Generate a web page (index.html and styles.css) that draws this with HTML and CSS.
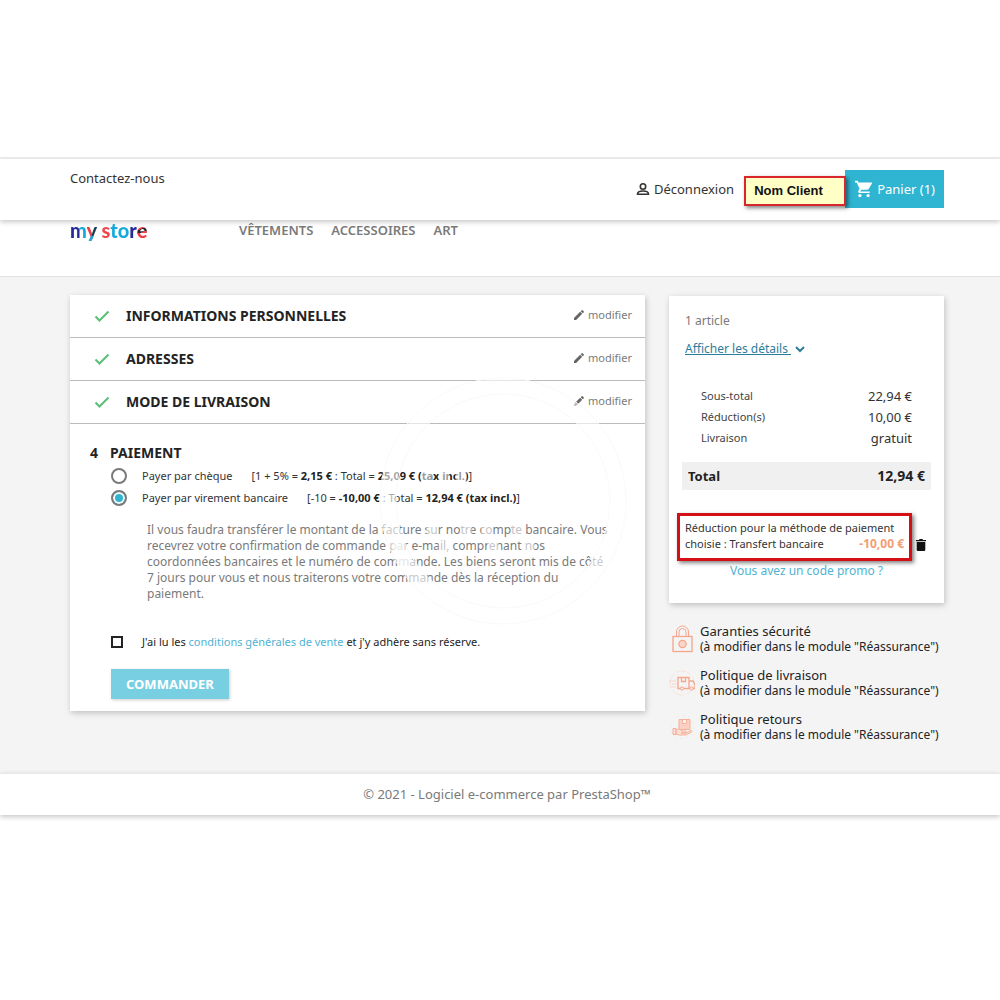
FILE: index.html
```html
<!DOCTYPE html>
<html lang="fr">
<head>
  <meta charset="UTF-8">
  <meta name="viewport" content="width=device-width, initial-scale=1.0">
  <title>Commande - my store</title>
  <link rel="stylesheet" href="styles.css">
</head>
<body>
  <div class="page">
    <header>
      <nav class="top-nav">
        <a class="contact" href="#">Contactez-nous</a>
        <div class="user-links">
          <a class="logout" href="#">
            <svg width="14" height="16" viewBox="0 0 14 16" fill="none" stroke="#333" stroke-width="1.600"><circle cx="7" cy="5.500" r="2.700"/><path d="M1.500 13.200c0-2.400 2.800-3.200 5.500-3.200s5.500.8 5.500 3.200z"/></svg>
            Déconnexion
          </a>
          <span class="client">Nom Client</span>
          <a class="cart" href="#">
            <svg width="18" height="18" viewBox="1 2 22 20" fill="#fff"><path d="M7 18c-1.100 0-2 .9-2 2s.9 2 2 2 2-.9 2-2-.9-2-2-2zM1 2v2h2l3.600 7.600-1.400 2.400C4.500 15.400 5.500 17 7 17h12v-2H7.400l1.100-2h7.500c.7 0 1.400-.4 1.700-1L21.900 5c.4-.7-.1-1-.9-1H5.200L4.300 2H1zm16 16c-1.100 0-2 .9-2 2s.9 2 2 2 2-.9 2-2-.9-2-2-2z"/></svg>
            Panier (1)
          </a>
        </div>
      </nav>
      <div class="menu-bar">
        <a class="logo" href="#" aria-label="my store"><span class="l-m">m</span><span class="l-y">y</span> <span class="l-s">s</span><span class="l-t">to</span><span class="l-r">r</span><span class="l-e">e</span></a>
        <ul class="menu">
          <li><a href="#">VÊTEMENTS</a></li>
          <li><a href="#">ACCESSOIRES</a></li>
          <li><a href="#">ART</a></li>
        </ul>
      </div>
    </header>

    <main class="checkout">
      <div class="steps">
        <section class="step">
          <svg class="done" width="16" height="12" viewBox="0 0 16 12"><path d="M1.500 6.500l4 4L14.500 1.500"/></svg>
          <h2>INFORMATIONS PERSONNELLES</h2>
          <a class="edit" href="#"><svg width="10" height="10" viewBox="0 0 18 18"><path d="M0 14.200V18h3.800L14.800 6.900l-3.700-3.700L0 14.200zM17.700 4a1 1 0 0 0 0-1.400L15.400.3a1 1 0 0 0-1.400 0l-1.900 1.800 3.800 3.800L17.700 4z"/></svg>modifier</a>
        </section>
        <section class="step">
          <svg class="done" width="16" height="12" viewBox="0 0 16 12"><path d="M1.500 6.500l4 4L14.500 1.500"/></svg>
          <h2>ADRESSES</h2>
          <a class="edit" href="#"><svg width="10" height="10" viewBox="0 0 18 18"><path d="M0 14.200V18h3.800L14.800 6.900l-3.700-3.700L0 14.200zM17.700 4a1 1 0 0 0 0-1.400L15.400.3a1 1 0 0 0-1.400 0l-1.900 1.800 3.800 3.800L17.700 4z"/></svg>modifier</a>
        </section>
        <section class="step">
          <svg class="done" width="16" height="12" viewBox="0 0 16 12"><path d="M1.500 6.500l4 4L14.500 1.500"/></svg>
          <h2>MODE DE LIVRAISON</h2>
          <a class="edit" href="#"><svg width="10" height="10" viewBox="0 0 18 18"><path d="M0 14.200V18h3.800L14.800 6.900l-3.700-3.700L0 14.200zM17.700 4a1 1 0 0 0 0-1.400L15.400.3a1 1 0 0 0-1.400 0l-1.900 1.800 3.800 3.800L17.700 4z"/></svg>modifier</a>
        </section>

        <section class="payment">
          <h2><span class="number">4</span>PAIEMENT</h2>
          <form class="payment-form">
            <div class="option">
              <input type="radio" name="payment" id="pay-check">
              <label for="pay-check">Payer par chèque</label>
              <span class="fee">[1 + 5% = <b>2,15 €</b> : Total = <b>25,09 € (tax incl.)</b>]</span>
            </div>
            <div class="option">
              <input type="radio" name="payment" id="pay-wire" checked>
              <label for="pay-wire">Payer par virement bancaire</label>
              <span class="fee">[-10 = <b>-10,00 €</b> : Total = <b>12,94 € (tax incl.)</b>]</span>
            </div>
            <p class="info">Il vous faudra transférer le montant de la facture sur notre compte bancaire. Vous recevrez votre confirmation de commande par e-mail, comprenant nos coordonnées bancaires et le numéro de commande. Les biens seront mis de côté 7 jours pour vous et nous traiterons votre commande dès la réception du paiement.</p>
            <div class="terms">
              <input type="checkbox" id="terms">
              <label for="terms">J'ai lu les <a href="#">conditions générales de vente</a> et j'y adhère sans réserve.</label>
            </div>
            <button type="submit" class="order">COMMANDER</button>
          </form>
        </section>

        <!-- watermark over the payment step -->
        <svg class="watermark" width="250" height="250" viewBox="0 0 250 250" fill="none">
          <circle cx="125" cy="125" r="115" stroke="#fff" stroke-opacity=".6" stroke-width="15"/>
          <circle cx="125" cy="125" r="123" stroke="#fafafa"/>
          <circle cx="125" cy="125" r="107" stroke="#fafafa"/>
          <g stroke="#fff" stroke-opacity=".55">
            <path stroke-width="11" d="M49 92v14M66 92v14M83 94v12M54 146v15M88 146v15M109 146v15M139 146v15M21 162v15M66 162v15M115 162v15M151 162v15M25 178v14"/>
          </g>
        </svg>
      </div>

      <aside>
        <div class="summary">
          <p class="count">1 article</p>
          <a class="details" href="#"><span>Afficher les détails&nbsp;</span><svg width="10" height="7" viewBox="0 0 10 7"><path d="M1 1l4 4 4-4"/></svg></a>
          <dl class="lines">
            <div><dt>Sous-total</dt><dd>22,94 €</dd></div>
            <div><dt>Réduction(s)</dt><dd>10,00 €</dd></div>
            <div><dt>Livraison</dt><dd>gratuit</dd></div>
          </dl>
          <div class="total"><span>Total</span><span>12,94 €</span></div>
          <div class="voucher">
            <div class="voucher-box">
              <span>Réduction pour la méthode de paiement</span>
              <span>choisie : Transfert bancaire</span>
              <strong>-10,00 €</strong>
            </div>
            <button type="button" class="remove" aria-label="Supprimer">
              <svg width="10" height="12" viewBox="0 0 10 12" fill="#111"><path d="M0 1h3l.5-1h3L7 1h3v1.300H0zM.7 3h8.600v7.700c0 .7-.6 1.300-1.300 1.300H2C1.300 12 .7 11.400.7 10.700z"/></svg>
            </button>
          </div>
          <a class="promo" href="#">Vous avez un code promo ?</a>
        </div>

        <ul class="reassurance">
          <li>
            <svg width="26" height="28" viewBox="0 0 26 28" fill="none" stroke="#f5a68c"><rect x="4" y="11.500" width="19" height="15" stroke-width="1.300"/><path d="M7.500 11V7a6 6 0 0 1 12 0v4M10 11V7a3.500 3.500 0 0 1 7 0v4"/><circle cx="13.500" cy="19" r="3.600" fill="#fbd5c8" stroke-width="1.300"/></svg>
            <div>
              <p class="title">Garanties sécurité</p>
              <p>(à modifier dans le module "Réassurance")</p>
            </div>
          </li>
          <li>
            <svg width="26" height="28" viewBox="0 0 26 28" fill="none" stroke="#f5a68c"><circle cx="13" cy="14" r="12" stroke="#f9e4dd" stroke-dasharray="14 3"/><path stroke="#f9d5c8" d="M0 12h7M3 15h5M1 18h6"/><path stroke-width="1.300" d="M9 8.500h11v11H9zM20 12h4l2 4v3.500h-6M12.500 8.500v4h4v-4"/><circle cx="13" cy="19.500" r="1.600" fill="#f4f4f4"/><circle cx="22.500" cy="19.500" r="1.600" fill="#f4f4f4"/></svg>
            <div>
              <p class="title">Politique de livraison</p>
              <p>(à modifier dans le module "Réassurance")</p>
            </div>
          </li>
          <li>
            <svg width="26" height="28" viewBox="0 0 26 28" fill="none" stroke="#f5b29b"><circle cx="13" cy="14" r="11.500" stroke="#f9e4dd" stroke-dasharray="2 4"/><path fill="#fbd0c2" d="M10 6.500h11v10H10zM13.500 6.500v4h4v-4"/><path fill="#fbe0d7" d="M4 15.500h3v6H4zM7 16.500c3-1 4 0 6 1.500h4v2h-5 5l5-2.500c1 0 1 1 .5 1.500L17 22h-7l-3-1z"/></svg>
            <div>
              <p class="title">Politique retours</p>
              <p>(à modifier dans le module "Réassurance")</p>
            </div>
          </li>
        </ul>
      </aside>
    </main>

    <footer><a href="#">© 2021 - Logiciel e-commerce par PrestaShop™</a></footer>
  </div>
</body>
</html>
```
FILE: styles.css
```css
* {
  box-sizing: border-box;
}
body {
  margin: 0;
  background: #fff;
  color: #333;
  font-family: "Noto Sans", sans-serif;
  font-size: 13px;
  line-height: 16px;
}
h2, p, ul, dl, dd {
  margin: 0;
  padding: 0;
}
ul {
  list-style: none;
}
a {
  color: inherit;
  text-decoration: none;
}
h2 {
  color: #232323;
  font-size: 14px;
  line-height: 20px;
}
.page {
  margin: 157px 0;
  border-top: 2px solid #f0f0f0;
}

/* header */
.top-nav {
  position: relative;
  display: flex;
  justify-content: space-between;
  padding: 11px 56px 12px 70px;
  background: #fff;
  box-shadow: 0 2px 5px rgba(0, 0, 0, .22);
}
.user-links {
  display: flex;
  align-items: center;
}
.logout {
  display: flex;
  gap: 4px;
  margin-right: 10px;
}
.client {
  position: relative;
  width: 102px;
  margin: 4px -1px 0 0;
  padding: 5px 8px;
  background: #ffffc6;
  border: 2px solid #d9262c;
  box-shadow: 2px 2px 4px rgba(0, 0, 0, .5);
  color: #111;
  font-family: "Liberation Sans", sans-serif;
  font-weight: bold;
}
.cart {
  display: flex;
  align-items: center;
  gap: 4px;
  height: 38px;
  padding: 0 9px 0 10px;
  background: #2fb5d2;
  color: #fff;
}
.menu-bar {
  display: flex;
  align-items: flex-start;
  height: 56px;
  padding: 0 70px;
  background: #fff;
}
.logo {
  width: 169px;
  font-family: Lato, sans-serif;
  font-size: 20px;
  font-weight: 900;
  line-height: 20px;
}
.logo span {
  background-clip: text;
  color: transparent;
}
.l-m {
  background-image: linear-gradient(90deg, #252b9a 0 55%, #18a9dc 55%);
}
.l-y {
  background-image: linear-gradient(#0000 0 75%, #18a9dc 75%), linear-gradient(90deg, #ee3c43 0 50%, #174054 50%);
}
.l-s {
  background-image: linear-gradient(#f1454a, #f1454a);
}
.l-t {
  background-image: linear-gradient(#18a9dc, #18a9dc);
}
.l-r {
  background-image: linear-gradient(#252b9a, #252b9a);
}
.l-e {
  background-image: linear-gradient(160deg, #ee3c43 0 45%, #30232b 45% 58%, #ee3c43 58%);
}
.menu {
  display: flex;
  gap: 18px;
  padding-top: 2px;
  color: #7a7a7a;
  font-weight: 600;
}

/* checkout */
.checkout {
  display: flex;
  align-items: flex-start;
  gap: 24px;
  padding: 19px 56px 30px 70px;
  background: #f4f4f4;
  border-top: 1px solid #e2e2e2;
}
.steps {
  position: relative;
  flex: 1;
  margin-top: -1px;
  background: #fff;
  box-shadow: 1px 2px 6px rgba(0, 0, 0, .22);
}
.step {
  display: flex;
  align-items: center;
  padding: 11px 13px 11px 24px;
  border-bottom: 1px solid #bbb;
}
.done {
  margin-right: 16px;
  fill: none;
  stroke: #5bbf76;
  stroke-width: 2;
}
.edit {
  display: flex;
  align-items: center;
  gap: 4px;
  margin: 0 0 3px auto;
  color: #7a7a7a;
  font-size: 11px;
}
.edit svg {
  fill: #666;
}
.payment {
  padding: 19px 20px 12px;
}
.number {
  margin-right: 12px;
}
.payment-form {
  padding: 2px 0 0 21px;
}
.option {
  display: flex;
  align-items: center;
  height: 22px;
  font-size: 11px;
}
.option input {
  appearance: none;
  width: 16px;
  height: 16px;
  margin: 0 15px 0 0;
  border: 2px solid #7a7a7a;
  border-radius: 50%;
}
.option input:checked {
  background: #2fb5d2;
  box-shadow: inset 0 0 0 2px #fff;
}
.fee {
  margin-left: 19px;
}
.option b {
  color: #232323;
}
.info {
  margin: 13px 14px 0 36px;
  color: #7a7a7a;
  font-size: 12px;
}
.terms {
  display: flex;
  align-items: center;
  margin-top: 32px;
  color: #232323;
  font-size: 11px;
}
.terms input {
  appearance: none;
  width: 12px;
  height: 12px;
  margin: 0 19px 0 0;
  border: 2px solid #232323;
}
.terms a,
.promo {
  color: #4fb3d3;
}
.order {
  display: block;
  height: 30px;
  margin-top: 19px;
  padding: 0 15px;
  background: #79cfe2;
  border: 0;
  box-shadow: 1px 1px 3px rgba(0, 0, 0, .2);
  color: #fff;
  font-family: inherit;
  font-size: 13px;
  font-weight: bold;
}
.watermark {
  position: absolute;
  left: 308px;
  top: 81px;
  pointer-events: none;
}

/* cart summary */
aside {
  width: 275px;
}
.summary {
  padding: 17px 13px 24px;
  background: #fff;
  box-shadow: 1px 2px 6px rgba(0, 0, 0, .22);
}
.count {
  margin-left: 3px;
  color: #7a7a7a;
  font-size: 12px;
}
.details {
  display: flex;
  align-items: center;
  gap: 4px;
  margin: 12px 3px 0;
  color: #2c7d9c;
  font-size: 12px;
}
.details span {
  text-decoration: underline;
}
.details svg {
  fill: none;
  stroke: #2c7d9c;
  stroke-width: 2;
}
.lines {
  margin: 28px 19px 0;
}
.lines div {
  display: flex;
  align-items: center;
  justify-content: space-between;
  height: 21px;
}
.lines dt {
  color: #444;
  font-size: 11px;
}
.total {
  display: flex;
  align-items: center;
  justify-content: space-between;
  height: 28px;
  margin-top: 14px;
  padding: 0 6px;
  background: #f0f0f0;
  color: #232323;
  font-weight: bold;
}
.total span:last-child {
  font-size: 14px;
}
.voucher {
  display: flex;
  align-items: flex-end;
  gap: 4px;
  margin: 23px 5px 0 -5px;
}
.voucher-box {
  display: flex;
  flex-wrap: wrap;
  justify-content: space-between;
  width: 235px;
  padding: 4px 5px 6px;
  border: 3px solid #d40f16;
  box-shadow: 2px 2px 4px rgba(0, 0, 0, .5);
  font-size: 11px;
}
.voucher-box strong {
  color: #f39d72;
  font-size: 12px;
}
.remove {
  display: flex;
  margin-bottom: 10px;
  padding: 0;
  background: none;
  border: 0;
}
.promo {
  display: block;
  margin-top: 2px;
  font-size: 12px;
  text-align: center;
}

.reassurance {
  display: grid;
  gap: 12px;
  margin-top: 20px;
  color: #232323;
  font-size: 12px;
}
.reassurance li {
  display: flex;
  align-items: center;
  gap: 5px;
  white-space: nowrap;
}
.reassurance .title {
  font-size: 13px;
}

footer {
  padding: 12px 0 13px 14px;
  background: #fff;
  border-top: 1px solid #e8e8e8;
  box-shadow: 0 2px 5px rgba(0, 0, 0, .22);
  color: #7a7a7a;
  text-align: center;
}
```
